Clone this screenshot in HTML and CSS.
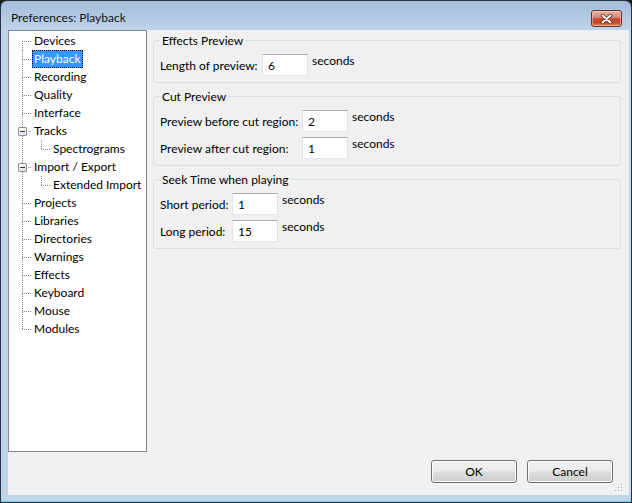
FILE: index.html
```html
<!DOCTYPE html>
<html lang="en">
<head>
<meta charset="utf-8">
<title>Preferences: Playback</title>
<link rel="stylesheet" href="styles.css">
</head>
<body>
<div class="window">
  <header class="titlebar">
    <span class="title">Preferences: Playback</span>
    <button class="close" aria-label="Close">
      <svg width="13" height="10" viewBox="0 0 13 10">
        <path d="M2.5 1.5 L10.5 8.5 M10.5 1.5 L2.5 8.5" stroke="#5a2418" stroke-width="3.6" stroke-linecap="round"/>
        <path d="M2.5 1.5 L10.5 8.5 M10.5 1.5 L2.5 8.5" stroke="#ffffff" stroke-width="2" stroke-linecap="round"/>
      </svg>
    </button>
  </header>
  <main class="client">
    <div class="content">
      <nav class="tree">
        <ul>
          <li class="row"><span class="gutter g-first"></span><span class="label">Devices</span></li>
          <li class="row"><span class="gutter g-mid"></span><span class="label selected">Playback</span></li>
          <li class="row"><span class="gutter g-mid"></span><span class="label">Recording</span></li>
          <li class="row"><span class="gutter g-mid"></span><span class="label">Quality</span></li>
          <li class="row"><span class="gutter g-mid"></span><span class="label">Interface</span></li>
          <li class="row"><span class="gutter g-mid"><span class="exp"></span></span><span class="label">Tracks</span></li>
          <li class="row"><span class="gutter g-child"></span><span class="label">Spectrograms</span></li>
          <li class="row"><span class="gutter g-mid"><span class="exp"></span></span><span class="label">Import / Export</span></li>
          <li class="row"><span class="gutter g-child"></span><span class="label">Extended Import</span></li>
          <li class="row"><span class="gutter g-mid"></span><span class="label">Projects</span></li>
          <li class="row"><span class="gutter g-mid"></span><span class="label">Libraries</span></li>
          <li class="row"><span class="gutter g-mid"></span><span class="label">Directories</span></li>
          <li class="row"><span class="gutter g-mid"></span><span class="label">Warnings</span></li>
          <li class="row"><span class="gutter g-mid"></span><span class="label">Effects</span></li>
          <li class="row"><span class="gutter g-mid"></span><span class="label">Keyboard</span></li>
          <li class="row"><span class="gutter g-mid"></span><span class="label">Mouse</span></li>
          <li class="row"><span class="gutter g-last"></span><span class="label">Modules</span></li>
        </ul>
      </nav>
      <section class="panel">
        <fieldset class="group">
          <legend>Effects Preview</legend>
          <div class="grid grid-effects">
            <label class="lbl">Length of preview:</label><input class="field" value="6"><span class="unit">seconds</span>
          </div>
        </fieldset>
        <fieldset class="group">
          <legend>Cut Preview</legend>
          <div class="grid grid-cut">
            <label class="lbl">Preview before cut region:</label><input class="field" value="2"><span class="unit">seconds</span>
            <label class="lbl">Preview after cut region:</label><input class="field" value="1"><span class="unit">seconds</span>
          </div>
        </fieldset>
        <fieldset class="group">
          <legend>Seek Time when playing</legend>
          <div class="grid grid-seek">
            <label class="lbl">Short period:</label><input class="field" value="1"><span class="unit">seconds</span>
            <label class="lbl">Long period:</label><input class="field" value="15"><span class="unit">seconds</span>
          </div>
        </fieldset>
      </section>
    </div>
    <footer class="buttons">
      <button class="btn">OK</button>
      <button class="btn">Cancel</button>
    </footer>
    <span class="grip">
      <svg width="10" height="10" viewBox="0 0 10 10">
        <g fill="#ffffff"><rect x="9" y="1" width="1" height="1"/><rect x="6" y="4" width="1" height="1"/><rect x="9" y="4" width="1" height="1"/><rect x="3" y="7" width="1" height="1"/><rect x="6" y="7" width="1" height="1"/><rect x="9" y="7" width="1" height="1"/></g>
        <g fill="#a3a3a3"><rect x="8" y="0" width="1" height="1"/><rect x="5" y="3" width="1" height="1"/><rect x="8" y="3" width="1" height="1"/><rect x="2" y="6" width="1" height="1"/><rect x="5" y="6" width="1" height="1"/><rect x="8" y="6" width="1" height="1"/></g>
      </svg>
    </span>
  </main>
</div>
</body>
</html>
```

FILE: styles.css
```css
* { box-sizing: border-box; }

html, body {
  margin: 0;
  padding: 0;
  background: #1b1b1b;
}

body {
  font-family: Lato, "Noto Sans", sans-serif;
  font-size: 12px;
  color: #000;
}

.window {
  width: 632px;
  height: 503px;
  border: 1px solid #2a3140;
  border-radius: 7px 7px 0 0;
  background: linear-gradient(to bottom, #a3bcd8 0px, #b4cbe4 18px, #bfd5ec 30px, #bfd5eb 100%);
  box-shadow: inset 0 -1px 0 #7ccbe6;
  display: flex;
  flex-direction: column;
  overflow: hidden;
}

/* Title bar */
.titlebar {
  height: 29px;
  display: flex;
  align-items: flex-start;
  justify-content: space-between;
  padding: 0 9px 0 10px;
  flex: none;
}

.title {
  margin-top: 9px;
  line-height: 16px;
  color: #101010;
}

.close {
  margin-top: 9px;
  width: 31px;
  height: 17px;
  padding: 0;
  border: 1px solid #6d2c22;
  border-radius: 3px;
  background: linear-gradient(to bottom, #eab2a3 0%, #d9897a 42%, #c24a33 52%, #c5472e 78%, #dd8a5c 100%);
  box-shadow: inset 0 0 0 1px rgba(255, 230, 220, 0.45);
  display: flex;
  align-items: center;
  justify-content: center;
}

/* Client area */
.client {
  position: relative;
  width: 621px;
  height: 465px;
  margin-left: 7px;
  background: #f0f0f0;
  display: flex;
  flex-direction: column;
  flex: none;
}

.content {
  display: flex;
  gap: 6px;
  height: 422px;
}

/* Tree */
.tree {
  --dv: repeating-linear-gradient(to bottom, #8e8e8e 0 1px, transparent 1px 2px);
  --dh: repeating-linear-gradient(to right, #8e8e8e 0 1px, transparent 1px 2px);
  width: 139px;
  height: 422px;
  border: 1px solid #828790;
  background: #fff;
  padding-top: 1px;
  flex: none;
}

.tree ul {
  list-style: none;
  margin: 0;
  padding: 0;
}

.row {
  display: flex;
  height: 18px;
}

.gutter {
  flex: none;
  width: 23px;
  height: 18px;
  display: flex;
  align-items: flex-start;
  background-repeat: no-repeat;
}

.g-mid {
  background-image: var(--dh), var(--dv);
  background-position: 13px 9px, 13px 0;
  background-size: 10px 1px, 1px 18px;
}

.g-first {
  background-image: var(--dh), var(--dv);
  background-position: 13px 9px, 13px 9px;
  background-size: 10px 1px, 1px 9px;
}

.g-last {
  background-image: var(--dh), var(--dv);
  background-position: 13px 9px, 13px 0;
  background-size: 10px 1px, 1px 10px;
}

.g-child {
  width: 42px;
  background-image: var(--dv), var(--dh), var(--dv);
  background-position: 13px 0, 32px 9px, 32px 0;
  background-size: 1px 18px, 10px 1px, 1px 10px;
}

.exp {
  width: 9px;
  height: 9px;
  margin: 5px 0 0 9px;
  border: 1px solid #919191;
  border-radius: 1px;
  background:
    linear-gradient(#1f3c64, #1f3c64) 1px 3px / 5px 1px no-repeat,
    linear-gradient(135deg, #ffffff 0%, #f0f0f0 50%, #d6d6d6 100%);
}

.label {
  height: 18px;
  line-height: 18px;
  padding: 0 2px;
  white-space: nowrap;
}

.label.selected {
  background: #3399ff;
  color: #fff;
  outline: 1px dotted #000;
  outline-offset: -1px;
}

/* Right panel */
.panel {
  width: 468px;
  padding-top: 3px;
  flex: none;
}

.group {
  margin: 0 0 6px 0;
  padding: 0 6px 6px 6px;
  border: 1px solid #d5dfe5;
  border-radius: 3px;
  min-width: 0;
}

.group legend {
  padding: 0 2px;
  line-height: 15px;
  font-size: 12px;
}

.grid {
  display: grid;
  column-gap: 4px;
  row-gap: 5px;
  margin-top: 6px;
  align-items: center;
}

.grid-effects { grid-template-columns: 98px 46px auto; }
.grid-cut { grid-template-columns: 138px 46px auto; }
.grid-seek { grid-template-columns: 68px 46px auto; }

.lbl {
  line-height: 15px;
  white-space: nowrap;
}

.field {
  width: 46px;
  height: 22px;
  margin: 0;
  padding: 0 0 0 5px;
  font: inherit;
  color: #000;
  background: #fff;
  border: 1px solid;
  border-color: #abadb3 #dbdfe6 #e3e9ef #e2e3ea;
  border-radius: 0;
  outline: none;
}

.unit {
  align-self: start;
  line-height: 15px;
  margin-top: -1px;
}

/* Buttons */
.buttons {
  display: flex;
  justify-content: flex-end;
  gap: 10px;
  padding: 8px 16px 12px 0;
}

.btn {
  width: 86px;
  height: 23px;
  margin: 0;
  padding: 0;
  font: inherit;
  color: #000;
  border: 1px solid #707070;
  border-radius: 3px;
  background: linear-gradient(to bottom, #f2f2f2 0%, #ebebeb 48%, #dddddd 52%, #cfcfcf 100%);
  box-shadow: inset 0 0 0 1px #fcfcfc;
}

.grip {
  position: absolute;
  right: 6px;
  bottom: 1px;
  width: 10px;
  height: 10px;
  line-height: 0;
}
```
